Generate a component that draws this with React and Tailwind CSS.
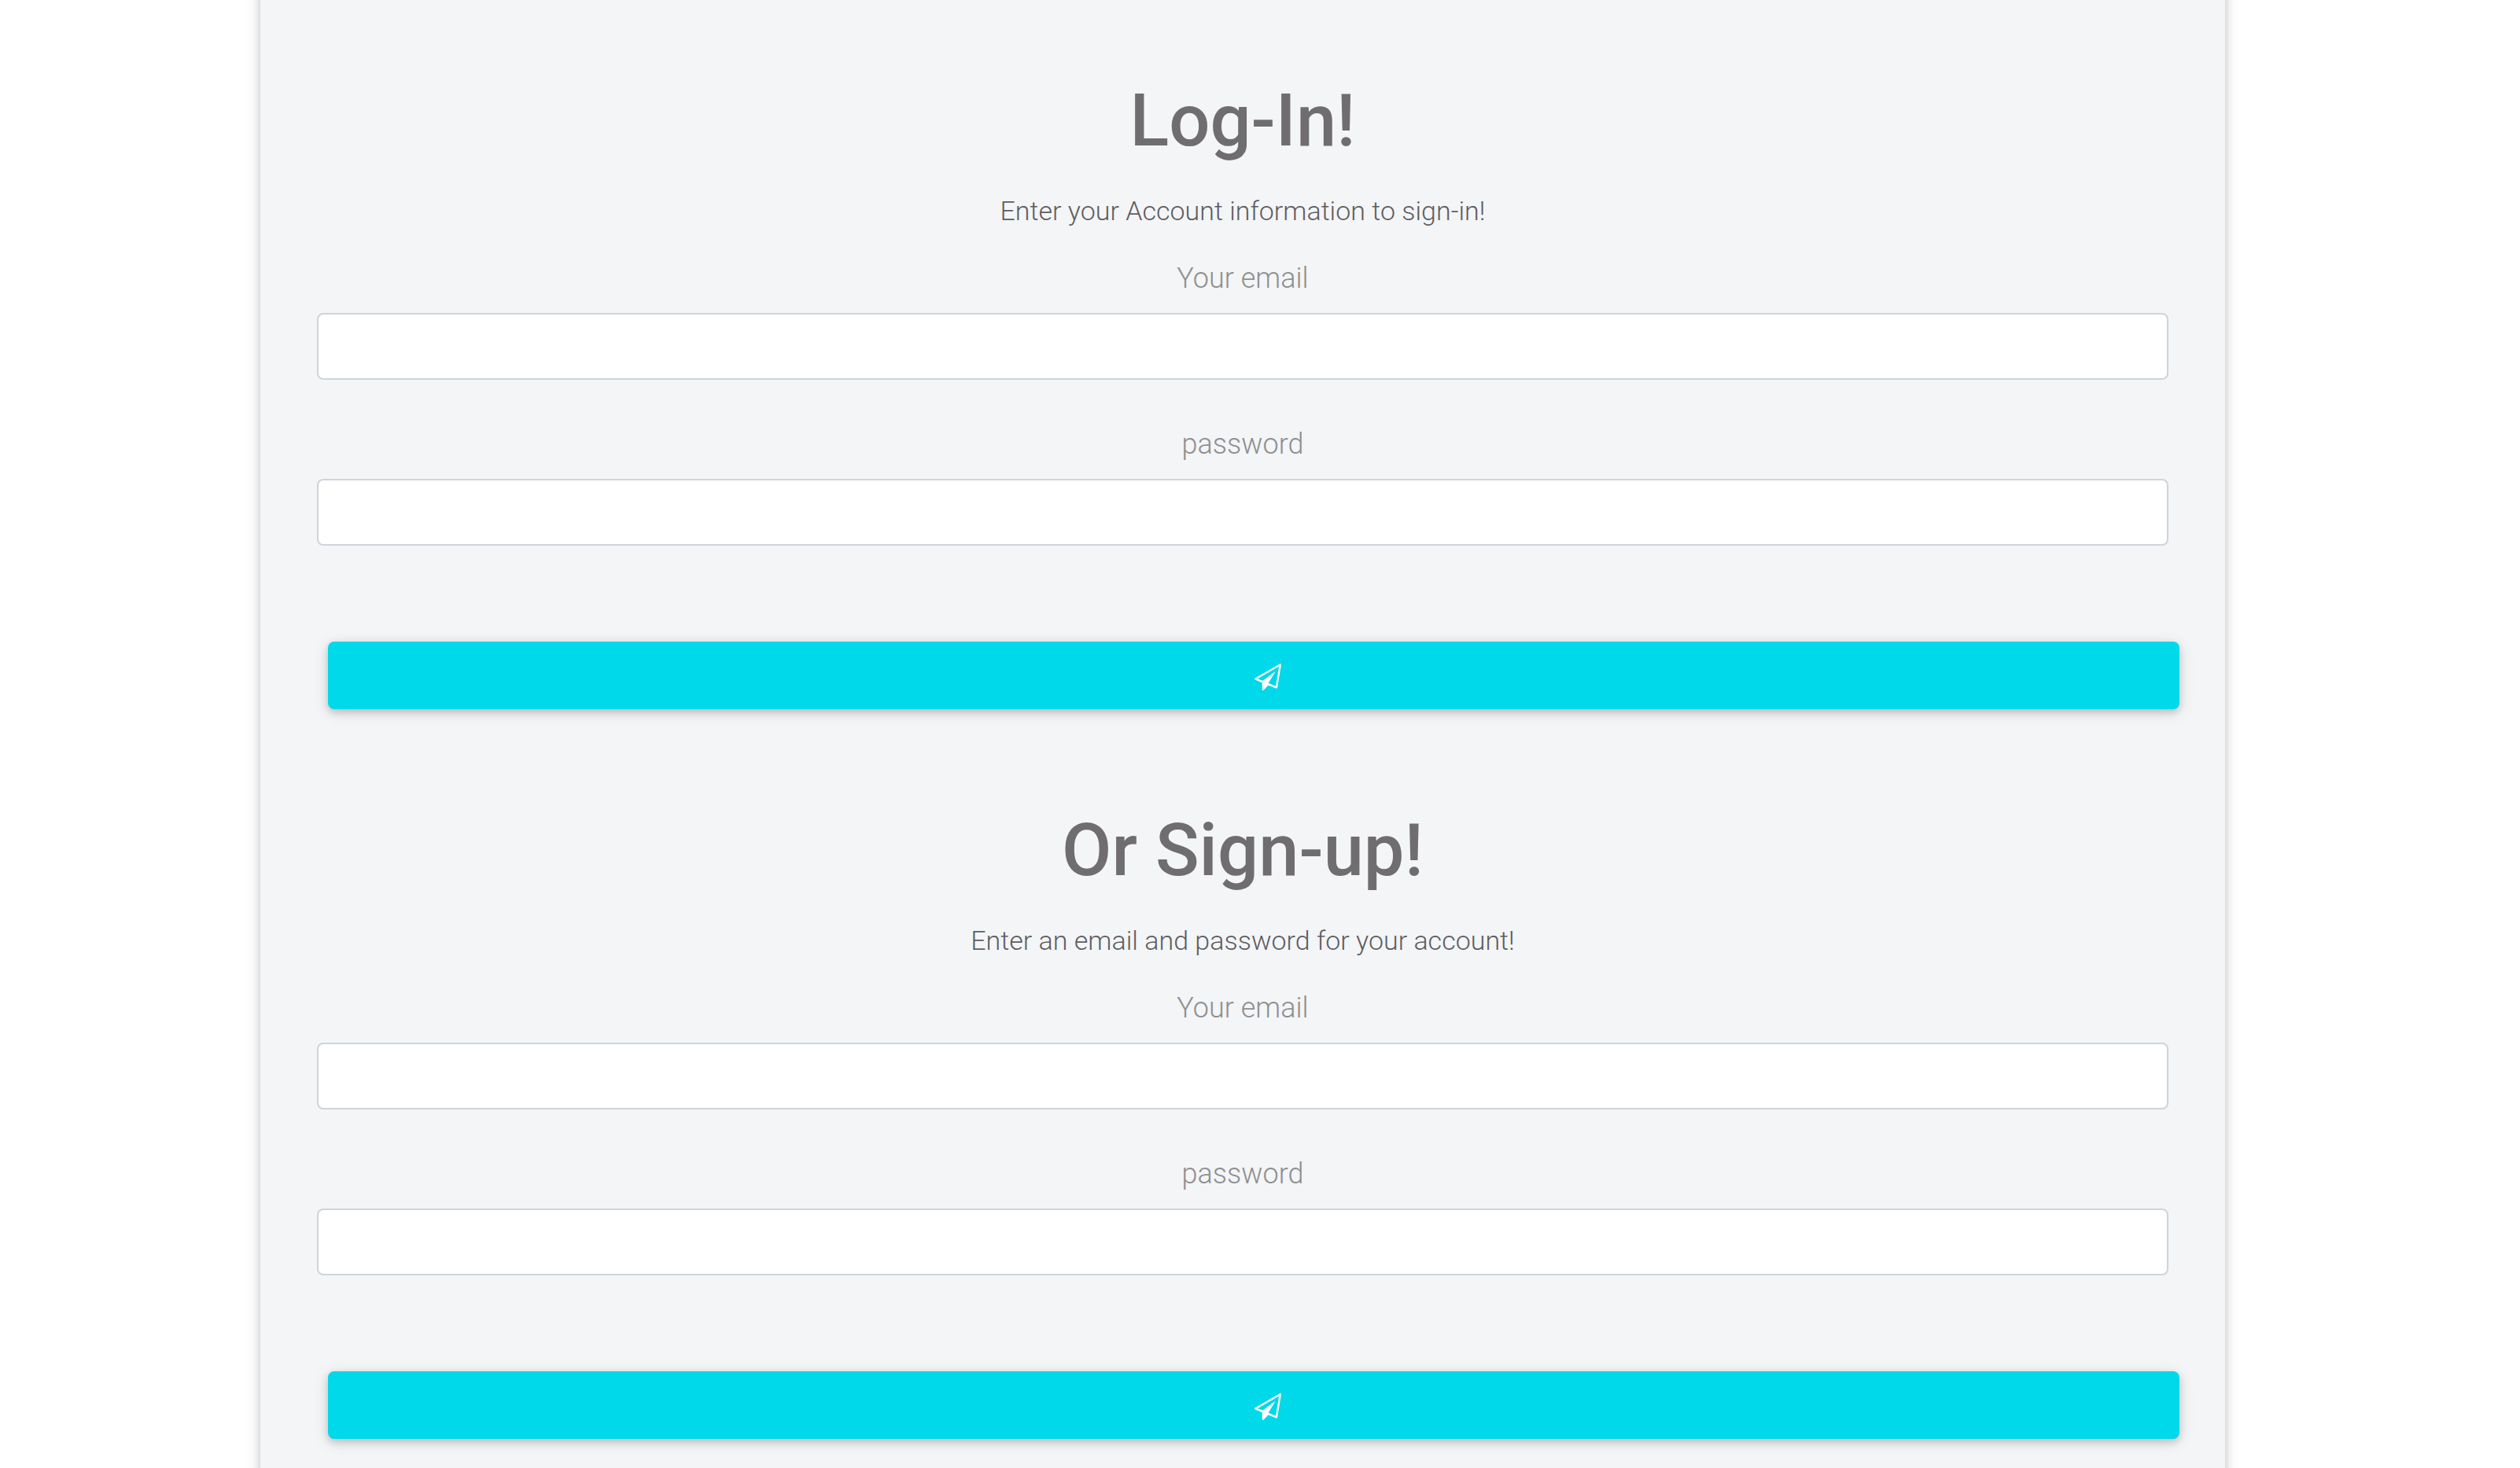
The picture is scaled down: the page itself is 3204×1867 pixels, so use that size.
function PaperPlane() {
  return (
    <svg viewBox="0 0 1792 1792" className="mt-1 ml-9 size-[34px]" fill="currentColor" aria-hidden="true">
      <path d="M1764 11q33 24 27 64l-256 1536q-5 29-32 45-14 8-31 8-11 0-24-5l-527-215-298 327q-18 21-47 21-14 0-23-4-19-7-30-23.5t-11-36.5v-452l-472-193q-37-14-40-55-3-39 32-59l1664-960q35-21 68 2zm-342 1499l221-1323-1434 827 336 137 863-639-478 797z" />
    </svg>
  );
}

function Field({ id, label, type }) {
  return (
    <div>
      <label htmlFor={id} className="mb-5 block text-center text-4xl leading-[48px] font-light text-[#8f8f8f]">
        {label}
      </label>
      <input
        id={id}
        type={type}
        className="block h-[85px] w-full rounded-lg border-2 border-[#ced4da] bg-white px-6 text-4xl font-light text-[#495057]"
      />
    </div>
  );
}

function AccountForm({ id, title, text, action }) {
  return (
    <form className="flex flex-col pb-[132px]" onSubmit={(e) => e.preventDefault()}>
      <h1 className="text-center text-[92px] leading-[96px] font-medium text-[#6f6d6f]">{title}</h1>
      <p className="mt-10 text-center text-[34px] leading-[52px] font-light text-[#5f5d5f]">{text}</p>
      <div className="mt-9 flex flex-col gap-[58px]">
        <Field id={`${id}-email`} label="Your email" type="email" />
        <Field id={`${id}-password`} label="password" type="password" />
      </div>
      <button
        type="submit"
        aria-label={action}
        className="mt-[122px] -mr-[14px] ml-[14px] flex h-[86px] items-center justify-center rounded-lg bg-[#00d9e9] text-white shadow-[0_4px_10px_rgba(0,0,0,0.16),0_4px_20px_rgba(0,0,0,0.12)]"
      >
        <PaperPlane />
      </button>
    </form>
  );
}

export default function App() {
  return (
    <div className="h-screen overflow-hidden bg-white pr-[375px] pl-[331px] font-['Roboto',sans-serif]">
      <main className="-mt-10 min-h-screen bg-[#f3f5f7] px-[72px] pt-[146px] shadow-[0_4px_10px_rgba(0,0,0,0.16),0_4px_20px_rgba(0,0,0,0.12)]">
        <AccountForm id="login" title="Log-In!" text="Enter your Account information to sign-in!" action="Log in" />
        <AccountForm id="signup" title="Or Sign-up!" text="Enter an email and password for your account!" action="Sign up" />
      </main>
    </div>
  );
}
